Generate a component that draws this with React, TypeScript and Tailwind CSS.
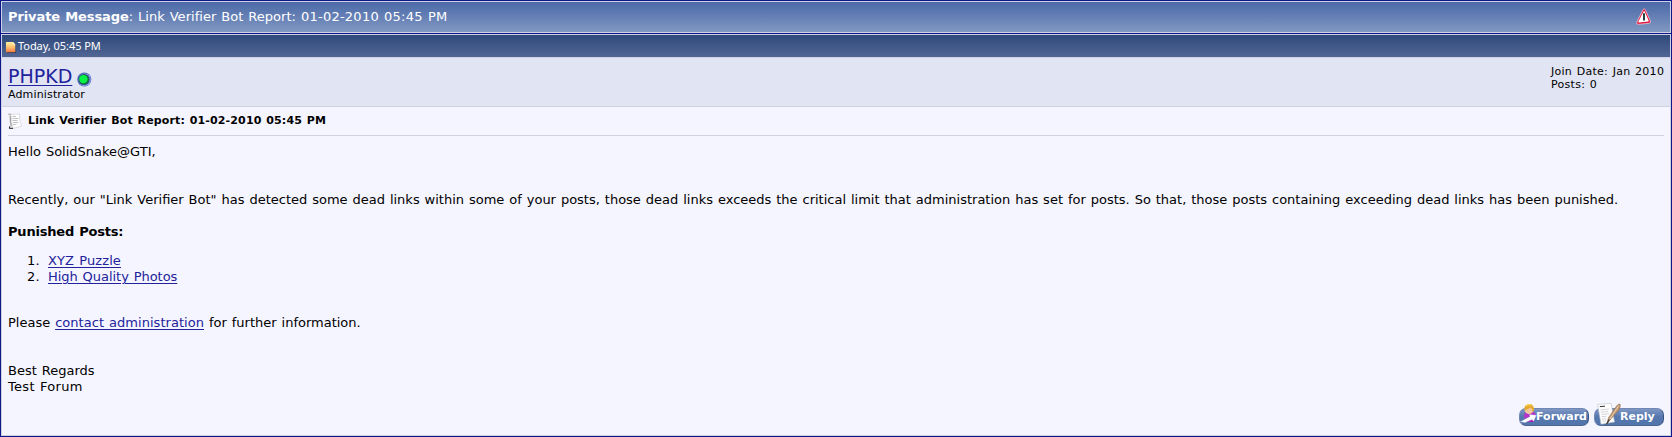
import type { ReactNode } from "react";

function PostIcon() {
  return (
    <svg className="block h-[11px] w-[10px] shrink-0" viewBox="0 0 10 11">
      <defs>
        <linearGradient id="post" x1="0" y1="0" x2="0" y2="1">
          <stop offset="0" stopColor="#fff2a0" />
          <stop offset="0.5" stopColor="#ffc070" />
          <stop offset="1" stopColor="#f27840" />
        </linearGradient>
      </defs>
      <path d="M1 11V10.2H9.5V3L10 3.5V11Z" fill="#1c2c50" />
      <path d="M0 0H7L9.3 2.4V10.3H0Z" fill="url(#post)" />
      <path d="M7 0V2.4H9.3Z" fill="#fff6cf" />
    </svg>
  );
}

function OnlineIcon() {
  return (
    <svg className="block h-[15px] w-[15px] shrink-0" viewBox="0 0 15 15">
      <circle cx="7.3" cy="7.5" r="7" fill="#4c63b0" />
      <circle cx="7.7" cy="7.7" r="6.3" fill="#86a0e2" />
      <circle cx="7" cy="7.5" r="5.6" fill="#2c4a84" />
      <circle cx="7" cy="7.5" r="4.8" fill="#0c7a35" />
      <circle cx="6.4" cy="7.1" r="4.2" fill="#08f246" />
    </svg>
  );
}

function NoteIcon() {
  return (
    <svg className="block h-4 w-[14px] shrink-0" viewBox="0 0 14 16">
      <path d="M3 1.5L11.5 0.8Q11.2 7 13.5 13.2L5 15.4Q3 9 3 1.5Z" fill="#fff" stroke="#d4d4d8" strokeWidth="0.8" />
      <path d="M0.4 1.2L2.8 1.2Q2.2 9 4.6 14.8L1.6 15.4Q2.4 8 0.4 1.2Z" fill="#e2e2e2" />
      <path d="M0.3 1.2H3M2.3 3Q2 9 3.4 13" fill="none" stroke="#77777b" strokeWidth="0.7" />
      <path d="M1.6 13.4L1.4 15.4L5 15.3" fill="none" stroke="#222" strokeWidth="1" />
      <path d="M4.3 3.5H8M4.4 5.5H10.5M4.5 7.5H9.5M4.7 9.5H10.5M5 11.5H8.5" stroke="#b0b0b6" strokeWidth="0.8" />
    </svg>
  );
}

function ReportIcon() {
  return (
    <svg className="block h-[17px] w-[15px]" viewBox="0 0 15 17">
      <path d="M2.2 16.4L13 15.3Q15 14.9 14.4 13L9.3 1.6Q8.2 0 7 1.7L0.8 14.2Q0.2 16.6 2.2 16.4Z" fill="#e0163c" stroke="#f4d9e4" strokeWidth="0.7" />
      <path d="M3 14.6L12.2 13.6Q13 13.4 12.6 12.6L8.7 3.5Q8.1 2.7 7.6 3.6L2.4 13.5Q2 14.7 3 14.6Z" fill="#fff" />
      <path d="M8 5.2V12.6" stroke="#173636" strokeWidth="1.9" />
    </svg>
  );
}

function ForwardArt() {
  return (
    <svg className="absolute left-0 top-0 h-6 w-[70px]" viewBox="0 0 70 24">
      <path d="M5 13Q5 9 9 9H14Q17.5 10 17 14L14 19H7Z" fill="#b634c9" />
      <path d="M7 15L15 11V19H7Z" fill="#a51ebc" />
      <circle cx="10" cy="6.8" r="4.3" fill="#f4c69f" />
      <path d="M5.4 7.2Q4.8 1.3 10 1Q15.3 1 15 7.5L13.6 9.5Q14 6.5 11.5 4.5Q8 7 5.4 7.2Z" fill="#e5a92b" />
      <path d="M7 2.8Q9.5 1 12.5 2.3" stroke="#ffe066" strokeWidth="1.2" fill="none" />
      <path d="M1.5 18.7L11 13.5L10.5 11.6L17.4 12.2L14.6 18.3L13 16.5L6 19.6Z" fill="#fff" stroke="#b6c3dc" strokeWidth="0.4" />
    </svg>
  );
}

function ReplyArt() {
  return (
    <svg className="absolute left-0 top-0 h-6 w-[70px]" viewBox="0 0 70 24">
      <path d="M3.6 1.3L17 0.5L20.5 19L7 21.2Z" fill="#fff" stroke="#b9bdc8" strokeWidth="0.6" />
      <path d="M5.8 3.6L11 3.2" stroke="#333" strokeWidth="1" />
      <path d="M6.3 7L15 6M6.8 9.3L14 8.4M7.2 11.6L15 10.6M7.6 13.8L12.5 13.2M8.1 16.2L12 15.6M8.4 18.3L12 17.8" stroke="#c5c7ce" strokeWidth="0.8" />
      <path d="M13 20.5L14.4 14.8L21.5 4.5Q23.5 1 26 1Q26.9 3.7 24.8 7L17.5 15.3L13 20.5Z" fill="#c19974" stroke="#8c6a50" strokeWidth="0.6" />
      <path d="M14.5 18L24.7 2.8" stroke="#f0d7b7" strokeWidth="0.9" />
      <path d="M12.5 21.2L15.4 16.4" stroke="#303030" strokeWidth="1.1" />
    </svg>
  );
}

function PillButton({ label, art, className }: { label: string; art: ReactNode; className: string }) {
  return (
    <button className="relative flex h-6 w-[70px] items-end pb-px">
      <span className="h-[18px] w-[70px] rounded-[7px] border border-[#7286b3] border-b-[#4a6494] border-r-[#36517f] bg-linear-to-b from-[#7e97c4] via-[#5577ae] to-[#5275ab]" />
      {art}
      <span className={className}>{label}</span>
    </button>
  );
}

const link = "text-[#22229c] underline decoration-1 underline-offset-2";

export default function App() {
  return (
    <div className="flex h-[437px] w-full flex-col border border-[#0b198c] bg-[#0b198c] font-['DejaVu_Sans',sans-serif] text-[13px] leading-4 text-black [word-spacing:0.8px]">
      <header className="flex h-8 shrink-0 items-center justify-between border border-[#d1d1e1] bg-linear-to-b from-[#4c69a8] to-[#8198c2] pb-px pl-1.5 pr-[19px] text-white">
        <h1 className="whitespace-nowrap">
          <b className="tracking-[-0.1px]">Private Message</b>
          <span className="tracking-[0.03px]">: Link Verifier Bot Report: </span>
          <span className="tracking-[0.24px]">01-02-2010 05:45 PM</span>
        </h1>
        <ReportIcon />
      </header>

      <main className="mt-px flex grow flex-col border border-[#d1d1e1] bg-[#f5f5ff]">
        <div className="flex h-[22px] shrink-0 items-center gap-0.5 bg-linear-to-b from-[#2f4a7c] to-[#516693] pl-1 text-[11px] text-white">
          <div className="pt-[3px]"><PostIcon /></div>
          <span className="font-['Noto_Sans',sans-serif] tracking-[-0.05px] [word-spacing:0px]">Today, 05:45 PM</span>
        </div>

        <section className="flex h-[50px] shrink-0 justify-between border-y border-[#d1d1e1] bg-[#e1e4f2] px-1.5">
          <div className="pt-[7px]">
            <div className="flex h-[23px] items-start gap-[5px]">
              <a className="text-[19px] leading-[23px] text-[#22229c] underline decoration-1 underline-offset-2">PHPKD</a>
              <div className="pt-[7px]"><OnlineIcon /></div>
            </div>
            <div className="text-[11px] leading-[13px] tracking-[0.15px]">Administrator</div>
          </div>
          <div className="w-[113px] whitespace-nowrap pt-[7px] text-[11px] leading-[13px] tracking-[0.28px]">
            <div>Join Date: Jan 2010</div>
            <div>Posts: 0</div>
          </div>
        </section>

        <article className="flex grow flex-col px-1.5">
          <div className="flex h-7 shrink-0 items-center gap-1.5 text-[11px] font-bold">
            <NoteIcon />
            <h2 className="tracking-[0.14px]">Link Verifier Bot Report: 01-02-2010 05:45 PM</h2>
          </div>
          <hr className="shrink-0 border-[#d1d1e1]" />
          <p className="mt-2 whitespace-nowrap">Hello SolidSnake@GTI,</p>
          <p className="mt-8 whitespace-nowrap">Recently, our "Link Verifier Bot" has detected some dead links within some of your posts, those dead links exceeds the critical limit that administration has set for posts. So that, those posts containing exceeding dead links has been punished.</p>
          <p className="mt-4 font-bold tracking-[-0.2px]">Punished Posts:</p>
          <ol className="mt-[13px]">
            <li className="flex"><span className="w-10 pl-[19px] tracking-[0.3px]">1.</span><a className={`${link} tracking-[0.12px]`}>XYZ Puzzle</a></li>
            <li className="flex"><span className="w-10 pl-[19px] tracking-[0.3px]">2.</span><a className={`${link} tracking-[-0.04px]`}>High Quality Photos</a></li>
          </ol>
          <p className="mt-[30px]">Please <a className={`${link} tracking-[0.04px]`}>contact administration</a> for further information.</p>
          <p className="mt-8">Best Regards</p>
          <p className="tracking-[0.3px]">Test Forum</p>
          <div className="mt-2 flex justify-end gap-[5px]">
            <PillButton label="Forward" art={<ForwardArt />} className="absolute left-[17px] top-[6px] text-[11px] font-bold text-white" />
            <PillButton label="Reply" art={<ReplyArt />} className="absolute left-[26px] top-[6px] text-[11px] font-bold text-white" />
          </div>
        </article>
      </main>
    </div>
  );
}
